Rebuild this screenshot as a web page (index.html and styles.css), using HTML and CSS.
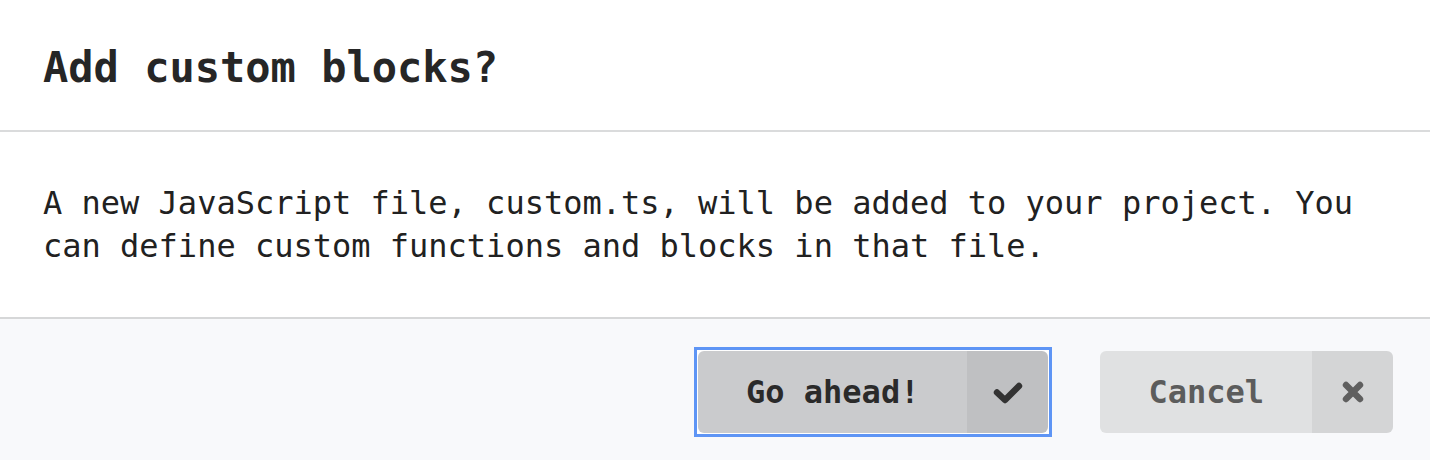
FILE: index.html
```html
<!DOCTYPE html>
<html lang="en">
<head>
<meta charset="utf-8">
<title>Add custom blocks?</title>
<link rel="stylesheet" href="styles.css">
</head>
<body>
<div class="dialog">
  <div class="dialog-header">Add custom blocks?</div>
  <div class="dialog-content">A new JavaScript file, custom.ts, will be added to your project. You can define custom functions and blocks in that file.</div>
  <div class="dialog-actions">
    <div class="focus-ring">
      <button class="btn btn-primary" type="button">
        <span class="btn-label">Go ahead!</span>
        <span class="btn-icon">
          <svg width="36" height="30" viewBox="0 0 36 30" aria-hidden="true"><path d="M7 15.5 L15 23 L29 9" fill="none" stroke="#333333" stroke-width="6.4" stroke-linecap="round" stroke-linejoin="round"/></svg>
        </span>
      </button>
    </div>
    <button class="btn btn-cancel" type="button">
      <span class="btn-label">Cancel</span>
      <span class="btn-icon">
        <svg width="28" height="28" viewBox="0 0 28 28" aria-hidden="true"><path d="M7 7 L21 21 M21 7 L7 21" fill="none" stroke="#5f5f5f" stroke-width="6.4" stroke-linecap="round"/></svg>
      </span>
    </button>
  </div>
</div>
</body>
</html>
```
FILE: styles.css
```css
html, body {
  margin: 0;
  padding: 0;
  background: #ffffff;
}

body {
  font-family: "DejaVu Sans Mono", "Liberation Mono", monospace;
  color: #222222;
}

.dialog {
  width: 100%;
  background: #ffffff;
}

.dialog-header {
  font-size: 42px;
  font-weight: bold;
  line-height: 52px;
  color: #262626;
  padding: 42px 43px 36px;
  border-bottom: 2px solid #dadbdc;
}

.dialog-content {
  font-size: 32px;
  line-height: 43px;
  color: #212121;
  padding: 50px 50px 49px 43px;
  border-bottom: 2px solid #d6d7d8;
}

.dialog-actions {
  background: #f8f9fb;
  display: flex;
  justify-content: flex-end;
  align-items: center;
  gap: 48px;
  padding: 28px 37px 30px;
  min-height: 90px;
}

.focus-ring {
  border: 3px solid #5e95f5;
  padding: 1px;
  background: #ffffff;
  display: flex;
}

.btn {
  display: flex;
  align-items: stretch;
  height: 82px;
  padding: 0;
  margin: 0;
  border: none;
  border-radius: 6px;
  overflow: hidden;
  font-family: "DejaVu Sans Mono", "Liberation Mono", monospace;
  font-size: 32px;
  font-weight: bold;
  cursor: pointer;
}

.btn-label {
  display: flex;
  align-items: center;
  padding: 0 48px;
}

.btn-icon {
  display: flex;
  align-items: center;
  justify-content: center;
  width: 81px;
  background: rgba(0, 0, 0, 0.05);
}

.btn-primary {
  background: #cacbcd;
  color: #2a2a2a;
}

.btn-cancel {
  background: #e0e1e2;
  color: #5c5c5c;
}
```
